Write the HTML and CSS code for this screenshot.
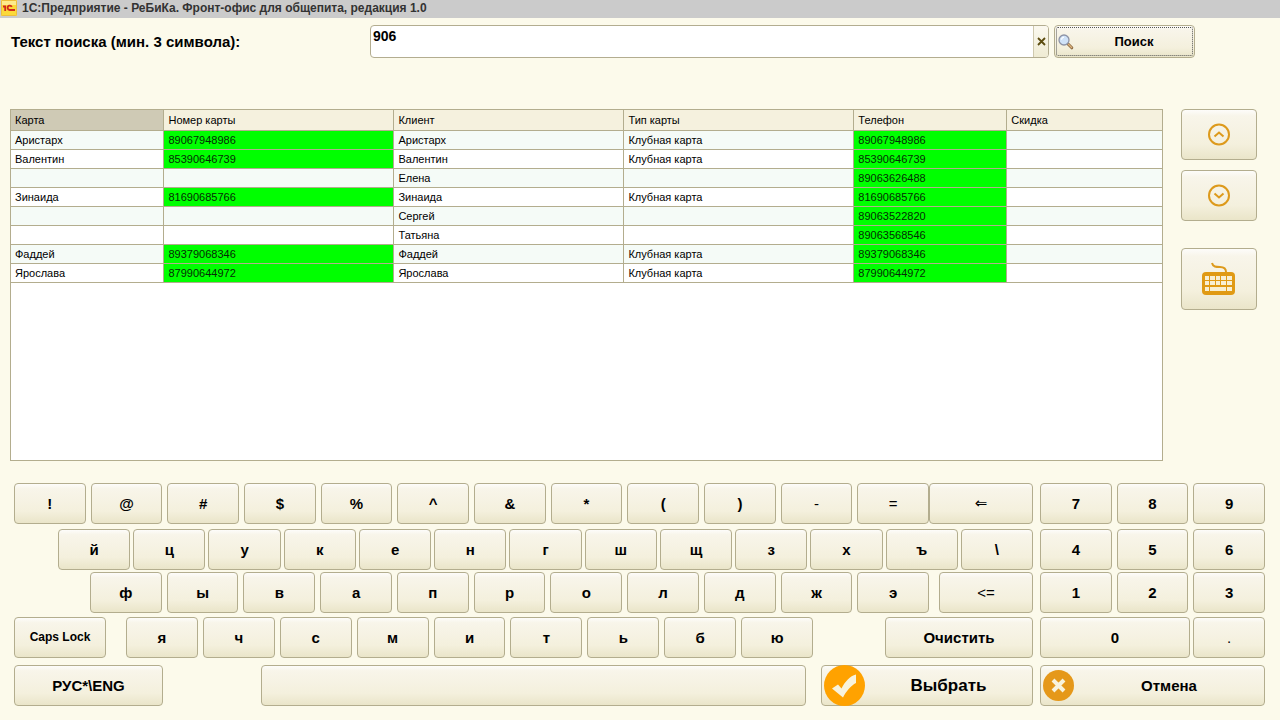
FILE: index.html
```html
<!DOCTYPE html>
<html lang="ru">
<head>
<meta charset="utf-8">
<title>1С:Предприятие - РеБиКа. Фронт-офис для общепита, редакция 1.0</title>
<link rel="stylesheet" href="styles.css">
</head>
<body>
<header class="titlebar">
  <svg class="logo" viewBox="0 0 16 16" aria-hidden="true">
    <rect width="16" height="16" rx="1" fill="#fbd93a"/>
    <path d="M1 1h14v4H1z" fill="#fdeb8c"/>
    <rect x=".5" y=".5" width="15" height="15" rx="1" fill="none" stroke="#edbd3c"/>
    <path d="M2 6.500h2.200V11" fill="none" stroke="#d0281c" stroke-width="1.800"/>
    <path d="M10.800 6.800A2.200 2.200 0 1 0 8.800 10H14" fill="none" stroke="#d0281c" stroke-width="1.800"/>
  </svg>
  <h1 class="title">1С:Предприятие - РеБиКа. Фронт-офис для общепита, редакция 1.0</h1>
</header>

<form class="search">
  <label class="search-label" for="query">Текст поиска (мин. 3 символа):</label>
  <div class="field">
    <input class="field-input" id="query" type="text" value="906">
    <button class="field-clear" type="button" aria-label="Очистить поле">
      <svg width="9" height="9" viewBox="0 0 9 9"><path d="M1 1l7 7M8 1 1 8" stroke="#5c4c10" stroke-width="1.8"/></svg>
    </button>
  </div>
  <button class="btn search-btn" type="button">
    <svg class="lens" width="16" height="16" viewBox="0 0 16 16" aria-hidden="true">
      <path d="M9.8 9.8l4 4" stroke="#8a6840" stroke-width="3" stroke-linecap="round"/>
      <path d="M10.4 10.2l3.2 3.2" stroke="#dcb27c" stroke-width="1.4" stroke-linecap="round"/>
      <circle cx="6" cy="6" r="5" fill="#cfe2f8" stroke="#8d93a6" stroke-width="1.3"/>
      <path d="M3.4 5.6A3 3 0 0 1 6 3.2" fill="none" stroke="#fff" stroke-width="1.3"/>
    </svg>
    <span class="btn-text">Поиск</span>
  </button>
</form>

<main class="results">
  <div class="table-box">
    <table class="table">
      <colgroup><col class="c-card"><col class="c-wide"><col class="c-wide"><col class="c-wide"><col class="c-card"><col class="c-last"></colgroup>
      <thead>
        <tr><th class="current">Карта</th><th>Номер карты</th><th>Клиент</th><th>Тип карты</th><th>Телефон</th><th>Скидка</th></tr>
      </thead>
      <tbody>
        <tr><td>Аристарх</td><td class="hit">89067948986</td><td>Аристарх</td><td>Клубная карта</td><td class="hit">89067948986</td><td></td></tr>
        <tr><td>Валентин</td><td class="hit">85390646739</td><td>Валентин</td><td>Клубная карта</td><td class="hit">85390646739</td><td></td></tr>
        <tr><td></td><td></td><td>Елена</td><td></td><td class="hit">89063626488</td><td></td></tr>
        <tr><td>Зинаида</td><td class="hit">81690685766</td><td>Зинаида</td><td>Клубная карта</td><td class="hit">81690685766</td><td></td></tr>
        <tr><td></td><td></td><td>Сергей</td><td></td><td class="hit">89063522820</td><td></td></tr>
        <tr><td></td><td></td><td>Татьяна</td><td></td><td class="hit">89063568546</td><td></td></tr>
        <tr><td>Фаддей</td><td class="hit">89379068346</td><td>Фаддей</td><td>Клубная карта</td><td class="hit">89379068346</td><td></td></tr>
        <tr><td>Ярослава</td><td class="hit">87990644972</td><td>Ярослава</td><td>Клубная карта</td><td class="hit">87990644972</td><td></td></tr>
      </tbody>
    </table>
  </div>
  <div class="side">
    <button class="btn side-btn" type="button" aria-label="Вверх">
      <svg width="24" height="24" viewBox="0 0 24 24" fill="none" stroke="#dd9a1c" stroke-width="2"><circle cx="12" cy="11.500" r="10"/><path d="M7.500 13.500 12 9.500l4.500 4"/></svg>
    </button>
    <button class="btn side-btn" type="button" aria-label="Вниз">
      <svg width="24" height="24" viewBox="0 0 24 24" fill="none" stroke="#dd9a1c" stroke-width="2"><circle cx="12" cy="11.500" r="10"/><path d="M7.500 9.500l4.500 4 4.500-4"/></svg>
    </button>
    <button class="btn side-btn side-keyboard" type="button" aria-label="Клавиатура">
      <svg width="34" height="34" viewBox="0 0 34 34">
        <path d="M10 1c1 4 4 4 8 4s6 1 6 5" fill="none" stroke="#dd9a1c" stroke-width="2"/>
        <rect x="0" y="10" width="33" height="23" rx="4" fill="#e09a14"/>
        <path fill="#f8efd2" d="M3 14h4v4H3zM8 14h5v4H8zM14 14h4v4h-4zM19 14h5v4h-5zM25 14h5v4h-5zM3 19h4v4H3zM8 19h5v4H8zM14 19h4v4h-4zM19 19h5v4h-5zM25 19h5v4h-5zM3 25h4v4H3zM8 25h16v4H8zM25 25h5v4h-5z"/>
      </svg>
    </button>
  </div>
</main>

<section class="keyboard" aria-label="Экранная клавиатура">
  <div class="line">
    <div class="part row-symbols">
      <div class="keys"><button class="btn key">!</button><button class="btn key">@</button><button class="btn key">#</button><button class="btn key">$</button><button class="btn key">%</button><button class="btn key">^</button><button class="btn key">&amp;</button><button class="btn key">*</button><button class="btn key">(</button><button class="btn key">)</button><button class="btn key light">-</button><button class="btn key light">=</button></div>
      <button class="btn key arrow">⇐</button>
    </div>
    <div class="keys"><button class="btn key">7</button><button class="btn key">8</button><button class="btn key">9</button></div>
  </div>
  <div class="line line-top">
    <div class="part row-upper">
      <div class="keys keys-tight"><button class="btn key">й</button><button class="btn key">ц</button><button class="btn key">у</button><button class="btn key">к</button><button class="btn key">е</button><button class="btn key">н</button><button class="btn key">г</button><button class="btn key">ш</button><button class="btn key">щ</button><button class="btn key">з</button><button class="btn key">х</button><button class="btn key">ъ</button><button class="btn key">\</button></div>
    </div>
    <div class="keys"><button class="btn key">4</button><button class="btn key">5</button><button class="btn key">6</button></div>
  </div>
  <div class="line line-home">
    <div class="part row-home">
      <div class="keys"><button class="btn key">ф</button><button class="btn key">ы</button><button class="btn key">в</button><button class="btn key">а</button><button class="btn key">п</button><button class="btn key">р</button><button class="btn key">о</button><button class="btn key">л</button><button class="btn key">д</button><button class="btn key">ж</button><button class="btn key">э</button></div>
      <button class="btn key light">&lt;=</button>
    </div>
    <div class="keys"><button class="btn key">1</button><button class="btn key">2</button><button class="btn key">3</button></div>
  </div>
  <div class="line line-lower">
    <div class="part row-lower">
      <button class="btn key caps">Caps Lock</button>
      <div class="keys"><button class="btn key">я</button><button class="btn key">ч</button><button class="btn key">с</button><button class="btn key">м</button><button class="btn key">и</button><button class="btn key">т</button><button class="btn key">ь</button><button class="btn key">б</button><button class="btn key">ю</button></div>
      <button class="btn key clear">Очистить</button>
    </div>
    <div class="keys zero-keys"><button class="btn key">0</button><button class="btn key light">.</button></div>
  </div>
  <div class="line line-bottom">
    <div class="part row-bottom">
      <button class="btn key lang">РУС*\ENG</button>
      <button class="btn key space" aria-label="Пробел"></button>
      <button class="btn action choose">
        <svg class="check" width="41" height="41" viewBox="0 0 41 41" aria-hidden="true"><circle cx="20.5" cy="20.5" r="20.5" fill="#ffa200"/><path d="M8 23.500l6-4 3.500 4C21 16.500 26 11 32 9.500V18c-5 2.500-9.500 8-13 14.500z" fill="#f8f3dd"/></svg>
        <span class="btn-text">Выбрать</span>
      </button>
    </div>
    <button class="btn action cancel">
      <svg width="31" height="31" viewBox="0 0 31 31" aria-hidden="true"><circle cx="15.500" cy="15.500" r="15.500" fill="#e5981a"/><path d="M10 10l11 11M21 10 10 21" stroke="#f8f3dd" stroke-width="4"/></svg>
      <span class="btn-text">Отмена</span>
    </button>
  </div>
</section>
</body>
</html>
```
FILE: styles.css
```css
* { box-sizing: border-box; }

body {
  margin: 0;
  background: #fcfaeb;
  color: #000;
  font-family: "Liberation Sans", Arial, sans-serif;
  font-size: 15px;
}

button, input { font: inherit; color: inherit; }

.titlebar {
  display: flex;
  align-items: center;
  gap: 5px;
  height: 18px;
  padding: 0 1px 2px;
  background: #cbcbcb;
}
.logo { width: 16px; height: 16px; }
.title { margin: 0; font-size: 12px; line-height: 16px; font-weight: bold; color: #333; }

.search {
  display: grid;
  grid-template-columns: 354fr 679fr 141fr 71fr;
  column-gap: 5px;
  padding: 7px 9px 0 11px;
}
.search-label { font-weight: bold; line-height: 33px; white-space: nowrap; }
.field {
  display: flex;
  height: 33px;
  border: 1px solid #b3ad90;
  border-radius: 4px;
  background: #fff;
  overflow: hidden;
}
.field-input {
  flex: 1;
  min-width: 0;
  padding: 0 2px 11px;
  border: 0;
  outline: 0;
  background: none;
  font-size: 14px;
  font-weight: bold;
}
.field-clear {
  display: grid;
  place-items: center;
  width: 15px;
  padding: 0;
  border: 0;
  border-left: 1px solid #cfc9ae;
  background: linear-gradient(#fbf9f0, #efebd3);
}

.btn {
  display: flex;
  align-items: center;
  justify-content: center;
  min-width: 0;
  padding: 0;
  border: 1px solid #b3ad8e;
  border-radius: 4px;
  background: linear-gradient(#fdfcfa 0, #f8f5ea 12%, #f4f0dd 70%, #eae5c9 100%);
  font-weight: bold;
}
.btn-text { flex: 1; text-align: center; }
.search-btn {
  height: 33px;
  padding: 0 0 0 3px;
  outline: 1px dotted #555;
  outline-offset: -3px;
  font-size: 13px;
}

.results {
  display: grid;
  grid-template-columns: 1153fr 76fr;
  column-gap: 18px;
  padding: 51px 23px 0 10px;
}
.table-box { height: 352px; border: 1px solid #b3ad8e; background: #fff; }
.table {
  width: 100%;
  border-collapse: collapse;
  table-layout: fixed;
  font-size: 11px;
  line-height: 14px;
}
.c-card { width: 13.29%; }
.c-wide { width: 19.98%; }
.table th, .table td {
  padding: 2px 4px;
  border: 1px solid #b3ad8e;
  text-align: left;
  font-weight: normal;
}
.table th { height: 20px; background: #f5f1de; }
.table td { height: 19px; }
.table th.current { background: #cfcab5; }
.table tr > :first-child { border-left: 0; }
.table tr > :last-child { border-right: 0; }
.table thead th { border-top: 0; }
.table tbody tr:nth-child(odd) { background: #f5fbf7; }
.table td.hit { background: #0f0; color: #052c05; }

.side { display: flex; flex-direction: column; gap: 10px; }
.side-btn { height: 51px; }
.side-keyboard { height: 62px; margin-top: 17px; }

.keyboard { padding: 22px 15px 14px 14px; }
.line { display: grid; grid-template-columns: 1019fr 225fr; column-gap: 7px; height: 41px; }
.line-top { margin-top: 5px; }
.line-home { margin-top: 2px; }
.line-lower { margin-top: 4px; }
.line-bottom { margin-top: 7px; }
.part { display: grid; min-width: 0; }
.keys { display: flex; gap: 5px; min-width: 0; }
.keys-tight { gap: 3px; }
.key { flex: 1 1 0; padding-bottom: 1px; }
.row-symbols { grid-template-columns: 915fr 104fr; }
.row-upper { grid-template-columns: 44fr 975fr; }
.row-upper .keys { grid-column: 2; }
.row-home { grid-template-columns: 76fr 839fr 10fr 94fr; }
.row-home .keys { grid-column: 2; }
.row-home > .key { grid-column: 4; }
.row-lower { grid-template-columns: 92fr 20fr 687fr 72fr 148fr; }
.row-lower .keys { grid-column: 3; }
.row-lower .clear { grid-column: 5; }
.row-bottom { grid-template-columns: 149fr 98fr 545fr 15fr 212fr; }
.row-bottom .space { grid-column: 3; }
.row-bottom .choose { grid-column: 5; }
.zero-keys { display: grid; grid-template-columns: 150fr 72fr; gap: 3px; }
.light { font-weight: normal; }
.arrow { font-family: "DejaVu Sans", sans-serif; font-weight: normal; }
.caps { font-size: 12px; }
.action { padding-left: 2px; }
.choose { font-size: 17px; }
.check { margin: -1px 0; }
```
